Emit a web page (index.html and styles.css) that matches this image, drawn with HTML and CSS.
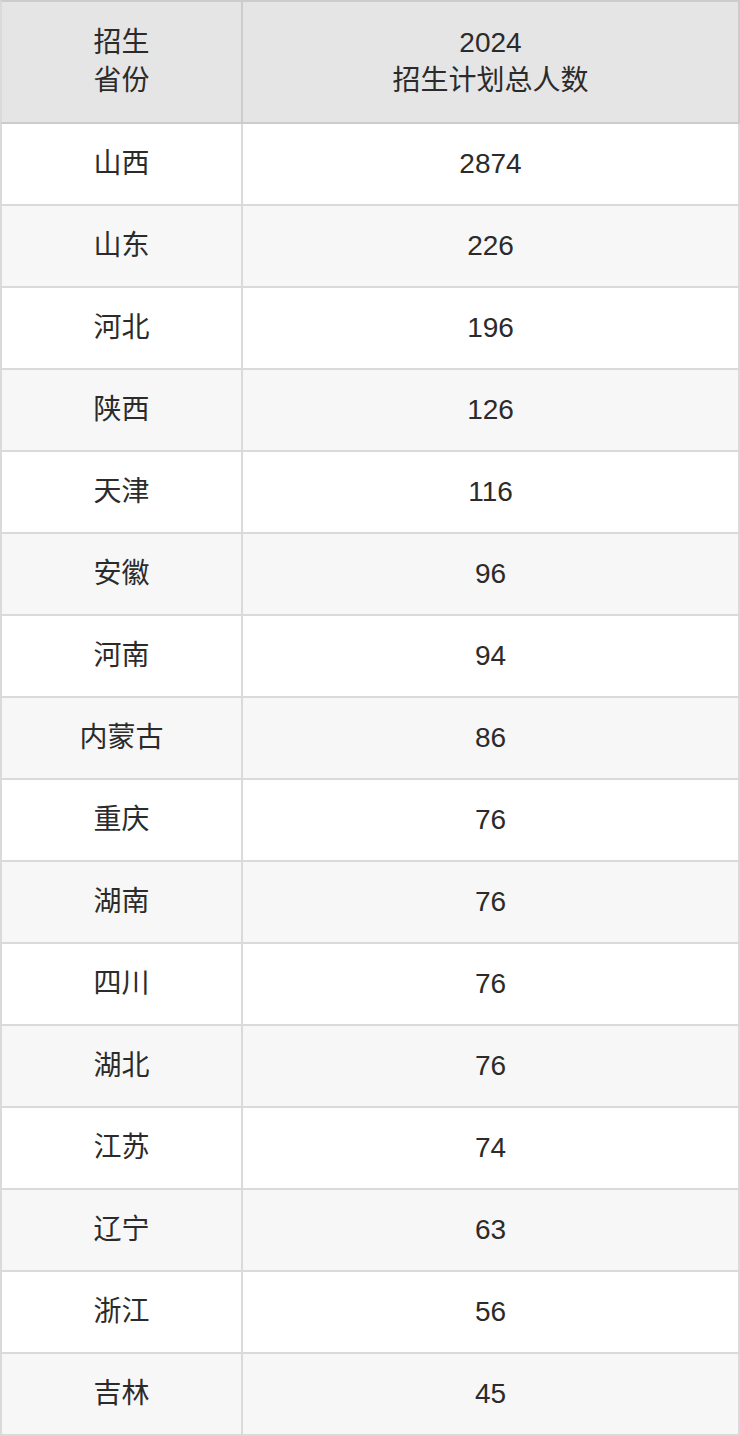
FILE: index.html
```html
<!DOCTYPE html>
<html lang="zh-CN">
<head>
<meta charset="utf-8">
<title>招生计划</title>
<link rel="stylesheet" href="styles.css">
</head>
<body>
<table class="plan">
  <colgroup><col class="c1"><col class="c2"></colgroup>
  <thead>
    <tr><th>招生<br>省份</th><th>2024<br>招生计划总人数</th></tr>
  </thead>
  <tbody>
    <tr><td>山西</td><td>2874</td></tr>
    <tr><td>山东</td><td>226</td></tr>
    <tr><td>河北</td><td>196</td></tr>
    <tr><td>陕西</td><td>126</td></tr>
    <tr><td>天津</td><td>116</td></tr>
    <tr><td>安徽</td><td>96</td></tr>
    <tr><td>河南</td><td>94</td></tr>
    <tr><td>内蒙古</td><td>86</td></tr>
    <tr><td>重庆</td><td>76</td></tr>
    <tr><td>湖南</td><td>76</td></tr>
    <tr><td>四川</td><td>76</td></tr>
    <tr><td>湖北</td><td>76</td></tr>
    <tr><td>江苏</td><td>74</td></tr>
    <tr><td>辽宁</td><td>63</td></tr>
    <tr><td>浙江</td><td>56</td></tr>
    <tr><td>吉林</td><td>45</td></tr>
  </tbody>
</table>
</body>
</html>
```

FILE: styles.css
```css
html, body {
  margin: 0;
  padding: 0;
  background: #ffffff;
}
.plan {
  width: 740px;
  table-layout: fixed;
  border-collapse: separate;
  border-spacing: 0;
  font-family: "Liberation Sans", "Noto Sans CJK SC", sans-serif;
  font-size: 28px;
  color: #2b2b2b;
}
.plan .c1 { width: 243px; }
.plan .c2 { width: 497px; }
.plan th, .plan td {
  box-sizing: border-box;
  padding: 0;
  text-align: center;
  vertical-align: middle;
  border-right: 2px solid #dadada;
  border-bottom: 2px solid #dadada;
}
.plan th:first-child, .plan td:first-child {
  border-left: 2px solid #dadada;
}
.plan th {
  height: 124px;
  font-weight: normal;
  line-height: 38px;
  background: #e5e5e5;
  border-top: 2px solid #cccccc;
  border-color: #cccccc;
}
.plan td {
  height: 82px;
  line-height: 36px;
}
.plan tbody tr:nth-child(even) td {
  background: #f7f7f7;
}
```
